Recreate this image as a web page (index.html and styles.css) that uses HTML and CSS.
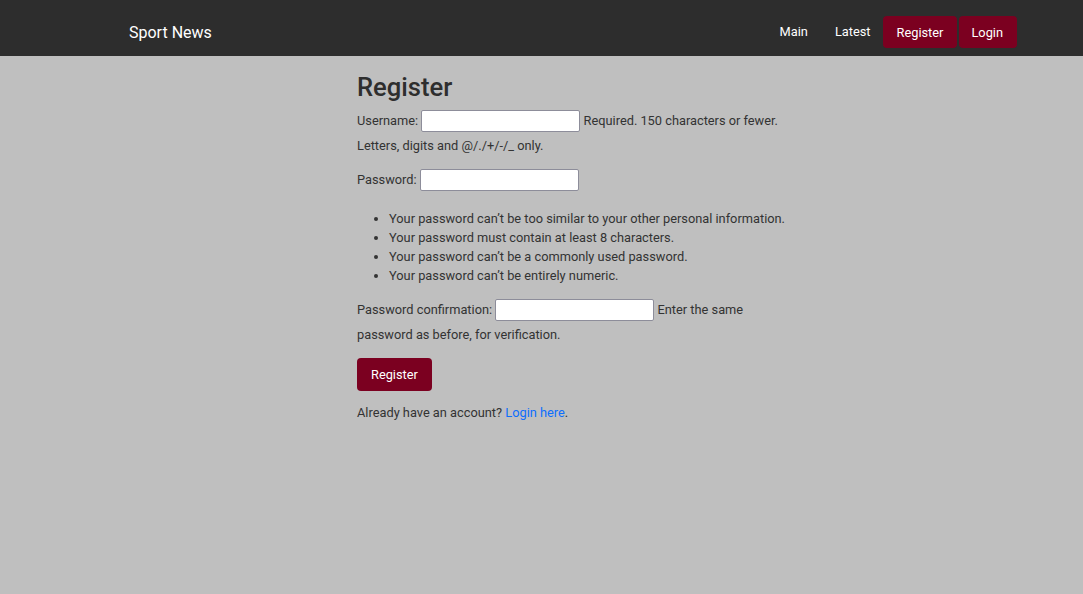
FILE: index.html
```html
<!DOCTYPE html>
<html lang="en">
<head>
<meta charset="utf-8">
<title>Register - Sport News</title>
<link rel="stylesheet" href="styles.css">
</head>
<body>
<nav class="navbar">
  <div class="navbar-inner">
    <a class="brand" href="#">Sport News</a>
    <ul class="nav">
      <li><a class="nav-link nav-link-main" href="#">Main</a></li>
      <li><a class="nav-link" href="#">Latest</a></li>
      <li><a class="nav-btn" href="#">Register</a></li>
      <li><a class="nav-btn nav-btn-login" href="#">Login</a></li>
    </ul>
  </div>
</nav>
<main class="content">
  <h1 class="title">Register</h1>
  <form class="form">
    <p class="field"><label for="u">Username:</label> <input id="u" class="input" type="text"> <span class="helptext">Required. 150 characters or fewer. Letters, digits and @/./+/-/_ only.</span></p>
    <p class="field"><label for="p1">Password:</label> <input id="p1" class="input" type="password"></p>
    <ul class="rules">
      <li>Your password can’t be too similar to your other personal information.</li>
      <li>Your password must contain at least 8 characters.</li>
      <li>Your password can’t be a commonly used password.</li>
      <li>Your password can’t be entirely numeric.</li>
    </ul>
    <p class="field"><label for="p2">Password confirmation:</label> <input id="p2" class="input" type="password"> <span class="helptext">Enter the same password as before, for verification.</span></p>
    <button class="submit" type="button">Register</button>
  </form>
  <p class="already">Already have an account? <a class="link" href="#">Login here</a>.</p>
</main>
</body>
</html>
```
FILE: styles.css
```css
html { font-size: 12.8px; }
body {
  margin: 0;
  background: #bfbfbf;
  color: #333333;
  font-family: Roboto, "Liberation Sans", sans-serif;
  font-size: 12.8px;
  line-height: 1.5;
}
.navbar {
  background: #2d2d2d;
  height: 56px;
  box-sizing: border-box;
  padding: 16px 0 8px;
}
.navbar-inner {
  display: flex;
  align-items: center;
  height: 32px;
  padding: 0 66px 0 129px;
}
.brand {
  color: #ffffff;
  text-decoration: none;
  font-size: 16px;
  line-height: 1;
  margin-top: 2px;
}
.nav {
  display: flex;
  align-items: center;
  list-style: none;
  margin: 0 0 0 auto;
  padding: 0;
}
.nav-link {
  display: block;
  color: #ffffff;
  text-decoration: none;
  padding: 0 11px 0 13px;
}
.nav-link-main { padding-right: 14px; }
.nav-btn {
  display: flex;
  align-items: center;
  box-sizing: border-box;
  height: 32px;
  padding: 1px 14px 0;
  margin-left: 1px;
  background: #7b0020;
  color: #ffffff;
  text-decoration: none;
  border-radius: 4px;
}
.nav-btn-login { margin-left: 2px; padding: 1px 14px 0 12px; }
.content {
  width: 436px;
  margin-left: 357px;
  padding-top: 16px;
}
.title {
  font-size: 25.6px;
  font-weight: 500;
  line-height: 1.2;
  margin: 0 0 5px;
  color: #2e2e2e;
}
.form { margin: 0; }
.field {
  margin: 0 0 9px;
  line-height: 25px;
}
.input {
  width: 159px;
  height: 22px;
  box-sizing: border-box;
  border: 1px solid #8d8d9a;
  border-radius: 2px;
  background: #ffffff;
  vertical-align: middle;
  padding: 1px 2px;
  font: inherit;
}
.rules {
  margin: 17px 0 12px;
  padding-left: 32px;
  line-height: 19px;
}
.submit {
  display: block;
  margin-top: 11px;
  height: 33px;
  padding: 0 14px;
  background: #7b0020;
  color: #ffffff;
  border: none;
  border-radius: 4px;
  font: inherit;
}
.already { margin: 12px 0 0; }
.link { color: #0d6efd; text-decoration: none; }
```
